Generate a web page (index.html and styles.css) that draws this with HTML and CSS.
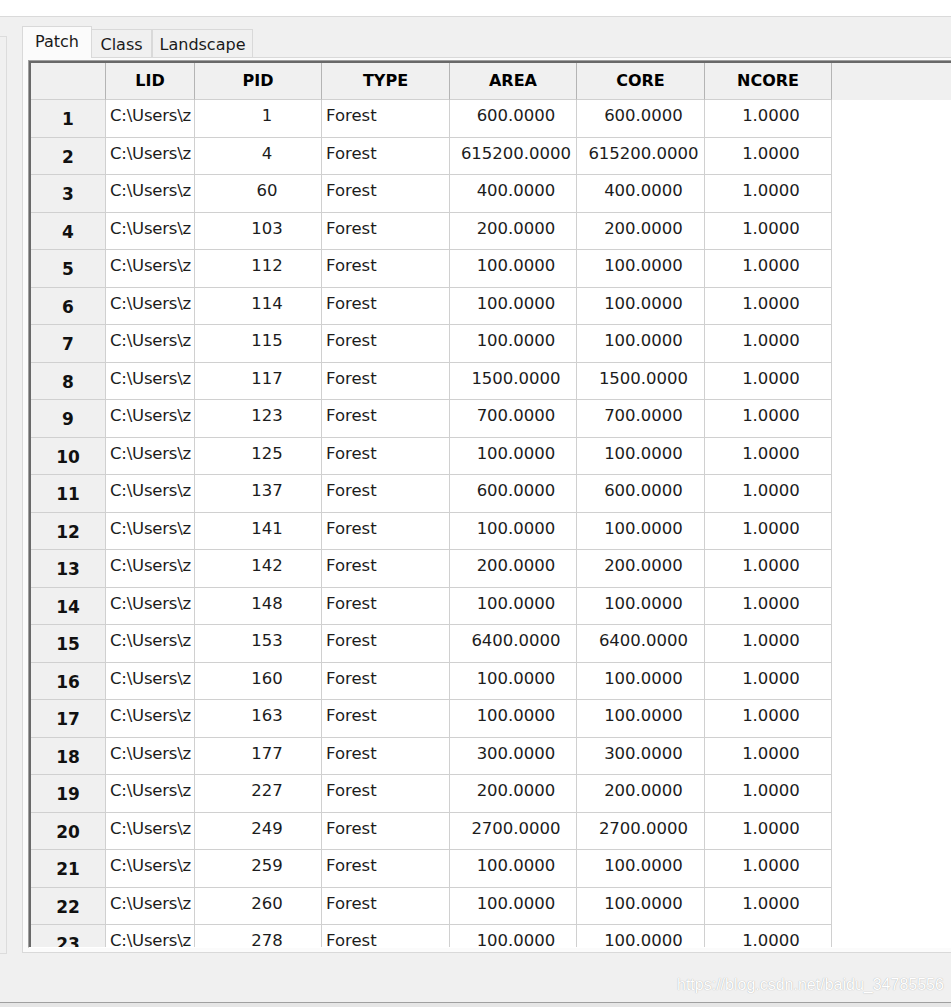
FILE: index.html
```html
<!DOCTYPE html>
<html lang="en">
<head>
    <meta charset="UTF-8">
    <meta name="viewport" content="width=device-width, initial-scale=1.0">
    <title>Patch Metrics</title>
    <link rel="stylesheet" href="styles.css">
</head>
<body>
    <div class="topbar"></div>
    <div class="workspace">
        <div class="side-panel"></div>
        <div class="tabs">
            <div class="tab-bar">
                <div class="tab active">Patch</div>
                <div class="tab tab-class">Class</div>
                <div class="tab tab-landscape">Landscape</div>
            </div>
            <div class="tab-pane">
                <div class="grid-frame">
                    <div class="grid">
                        <div class="row head">
                            <div class="cell corner"></div>
                            <div class="cell">LID</div>
                            <div class="cell">PID</div>
                            <div class="cell">TYPE</div>
                            <div class="cell">AREA</div>
                            <div class="cell">CORE</div>
                            <div class="cell">NCORE</div>
                            <div class="fill"></div>
                        </div>
                        <!-- patch rows -->
                        <div class="row"><div class="cell num">1</div><div class="cell lid">C:\Users\z</div><div class="cell pid">1</div><div class="cell type">Forest</div><div class="cell val">600.0000</div><div class="cell val">600.0000</div><div class="cell val">1.0000</div><div class="fill"></div></div>
                        <div class="row"><div class="cell num">2</div><div class="cell lid">C:\Users\z</div><div class="cell pid">4</div><div class="cell type">Forest</div><div class="cell val">615200.0000</div><div class="cell val">615200.0000</div><div class="cell val">1.0000</div><div class="fill"></div></div>
                        <div class="row"><div class="cell num">3</div><div class="cell lid">C:\Users\z</div><div class="cell pid">60</div><div class="cell type">Forest</div><div class="cell val">400.0000</div><div class="cell val">400.0000</div><div class="cell val">1.0000</div><div class="fill"></div></div>
                        <div class="row"><div class="cell num">4</div><div class="cell lid">C:\Users\z</div><div class="cell pid">103</div><div class="cell type">Forest</div><div class="cell val">200.0000</div><div class="cell val">200.0000</div><div class="cell val">1.0000</div><div class="fill"></div></div>
                        <div class="row"><div class="cell num">5</div><div class="cell lid">C:\Users\z</div><div class="cell pid">112</div><div class="cell type">Forest</div><div class="cell val">100.0000</div><div class="cell val">100.0000</div><div class="cell val">1.0000</div><div class="fill"></div></div>
                        <div class="row"><div class="cell num">6</div><div class="cell lid">C:\Users\z</div><div class="cell pid">114</div><div class="cell type">Forest</div><div class="cell val">100.0000</div><div class="cell val">100.0000</div><div class="cell val">1.0000</div><div class="fill"></div></div>
                        <div class="row"><div class="cell num">7</div><div class="cell lid">C:\Users\z</div><div class="cell pid">115</div><div class="cell type">Forest</div><div class="cell val">100.0000</div><div class="cell val">100.0000</div><div class="cell val">1.0000</div><div class="fill"></div></div>
                        <div class="row"><div class="cell num">8</div><div class="cell lid">C:\Users\z</div><div class="cell pid">117</div><div class="cell type">Forest</div><div class="cell val">1500.0000</div><div class="cell val">1500.0000</div><div class="cell val">1.0000</div><div class="fill"></div></div>
                        <div class="row"><div class="cell num">9</div><div class="cell lid">C:\Users\z</div><div class="cell pid">123</div><div class="cell type">Forest</div><div class="cell val">700.0000</div><div class="cell val">700.0000</div><div class="cell val">1.0000</div><div class="fill"></div></div>
                        <div class="row"><div class="cell num">10</div><div class="cell lid">C:\Users\z</div><div class="cell pid">125</div><div class="cell type">Forest</div><div class="cell val">100.0000</div><div class="cell val">100.0000</div><div class="cell val">1.0000</div><div class="fill"></div></div>
                        <div class="row"><div class="cell num">11</div><div class="cell lid">C:\Users\z</div><div class="cell pid">137</div><div class="cell type">Forest</div><div class="cell val">600.0000</div><div class="cell val">600.0000</div><div class="cell val">1.0000</div><div class="fill"></div></div>
                        <div class="row"><div class="cell num">12</div><div class="cell lid">C:\Users\z</div><div class="cell pid">141</div><div class="cell type">Forest</div><div class="cell val">100.0000</div><div class="cell val">100.0000</div><div class="cell val">1.0000</div><div class="fill"></div></div>
                        <div class="row"><div class="cell num">13</div><div class="cell lid">C:\Users\z</div><div class="cell pid">142</div><div class="cell type">Forest</div><div class="cell val">200.0000</div><div class="cell val">200.0000</div><div class="cell val">1.0000</div><div class="fill"></div></div>
                        <div class="row"><div class="cell num">14</div><div class="cell lid">C:\Users\z</div><div class="cell pid">148</div><div class="cell type">Forest</div><div class="cell val">100.0000</div><div class="cell val">100.0000</div><div class="cell val">1.0000</div><div class="fill"></div></div>
                        <div class="row"><div class="cell num">15</div><div class="cell lid">C:\Users\z</div><div class="cell pid">153</div><div class="cell type">Forest</div><div class="cell val">6400.0000</div><div class="cell val">6400.0000</div><div class="cell val">1.0000</div><div class="fill"></div></div>
                        <div class="row"><div class="cell num">16</div><div class="cell lid">C:\Users\z</div><div class="cell pid">160</div><div class="cell type">Forest</div><div class="cell val">100.0000</div><div class="cell val">100.0000</div><div class="cell val">1.0000</div><div class="fill"></div></div>
                        <div class="row"><div class="cell num">17</div><div class="cell lid">C:\Users\z</div><div class="cell pid">163</div><div class="cell type">Forest</div><div class="cell val">100.0000</div><div class="cell val">100.0000</div><div class="cell val">1.0000</div><div class="fill"></div></div>
                        <div class="row"><div class="cell num">18</div><div class="cell lid">C:\Users\z</div><div class="cell pid">177</div><div class="cell type">Forest</div><div class="cell val">300.0000</div><div class="cell val">300.0000</div><div class="cell val">1.0000</div><div class="fill"></div></div>
                        <div class="row"><div class="cell num">19</div><div class="cell lid">C:\Users\z</div><div class="cell pid">227</div><div class="cell type">Forest</div><div class="cell val">200.0000</div><div class="cell val">200.0000</div><div class="cell val">1.0000</div><div class="fill"></div></div>
                        <div class="row"><div class="cell num">20</div><div class="cell lid">C:\Users\z</div><div class="cell pid">249</div><div class="cell type">Forest</div><div class="cell val">2700.0000</div><div class="cell val">2700.0000</div><div class="cell val">1.0000</div><div class="fill"></div></div>
                        <div class="row"><div class="cell num">21</div><div class="cell lid">C:\Users\z</div><div class="cell pid">259</div><div class="cell type">Forest</div><div class="cell val">100.0000</div><div class="cell val">100.0000</div><div class="cell val">1.0000</div><div class="fill"></div></div>
                        <div class="row"><div class="cell num">22</div><div class="cell lid">C:\Users\z</div><div class="cell pid">260</div><div class="cell type">Forest</div><div class="cell val">100.0000</div><div class="cell val">100.0000</div><div class="cell val">1.0000</div><div class="fill"></div></div>
                        <div class="row"><div class="cell num">23</div><div class="cell lid">C:\Users\z</div><div class="cell pid">278</div><div class="cell type">Forest</div><div class="cell val">100.0000</div><div class="cell val">100.0000</div><div class="cell val">1.0000</div><div class="fill"></div></div>
                    </div>
                </div>
            </div>
        </div>
    </div>
    <div class="statusbar">
        <span class="watermark">https://blog.csdn.net/baidu_34785556</span>
    </div>
</body>
</html>
```

FILE: styles.css
```css
html, body {
    margin: 0;
    height: 100%;
    overflow: hidden;
}
body {
    background-color: #f0f0f0;
    font-family: "DejaVu Sans", Verdana, sans-serif;
    color: #1c1c1c;
    position: relative;
}
.topbar {
    height: 16px;
    background-color: #ffffff;
    border-bottom: 1px solid #dadada;
}
.workspace {
    display: flex;
    height: 985px;
    overflow: hidden;
}
.side-panel {
    width: 6px;
    margin-top: 19px;
    height: 916px;
    border-top: 1px solid #dcdcdc;
    border-right: 1px solid #dcdcdc;
    border-bottom: 1px solid #dcdcdc;
    flex-shrink: 0;
}
.tabs {
    margin-left: 15px;
    margin-top: 9px;
    flex: 1;
    min-width: 0;
    margin-right: -20px;
}
.tab-bar {
    display: flex;
    align-items: flex-end;
    height: 31px;
}
.tab {
    box-sizing: border-box;
    height: 28px;
    padding-top: 5px;
    font-size: 16px;
    color: #1a1a1a;
    background-color: #f0f0f0;
    border: 1px solid #d9d9d9;
    border-bottom: none;
    text-align: center;
}
.tab.active {
    height: 32px;
    width: 70px;
    padding-top: 5px;
    margin-bottom: -1px;
    background-color: #fbfbfb;
    position: relative;
    z-index: 1;
}
.tab-class {
    width: 60px;
    border-left: none;
}
.tab-landscape {
    width: 101px;
    border-left: 1px solid #d9d9d9;
}
.tab-pane {
    box-sizing: border-box;
    height: 896px;
    background-color: #fbfbfb;
    border: 1px solid #d9d9d9;
    padding: 2px 0 4px 5px;
}
.grid-frame {
    box-sizing: border-box;
    height: 888px;
    border-top: 1px solid #a0a0a0;
    border-left: 1px solid #a0a0a0;
    border-bottom: 1px solid #ffffff;
    box-shadow: inset 2px 2px 0 #696969;
    padding: 2px 0 0 2px;
}
.grid {
    height: 884px;
    overflow: hidden;
    background-color: #ffffff;
}
.row {
    display: grid;
    grid-template-columns: 75px 89px 127px 128px 127px 128px 127px 1fr;
    height: 37.5px;
}
.cell {
    box-sizing: border-box;
    border-right: 1px solid #d0d0d0;
    border-bottom: 1px solid #d0d0d0;
    font-size: 16.5px;
    line-height: 20px;
    padding-top: 6px;
    white-space: nowrap;
    overflow: hidden;
}
.head {
    height: 37px;
    background-color: #f0f0f0;
}
.head .cell {
    font-weight: bold;
    font-size: 16px;
    color: #000000;
    text-align: center;
    padding-top: 8px;
    border-right-color: #b4b4b4;
    border-bottom-color: #d0d0d0;
}
.num {
    background-color: #f0f0f0;
    font-weight: bold;
    font-size: 17px;
    color: #111111;
    text-align: center;
    padding-top: 9px;
}
.lid, .type {
    padding-left: 4px;
}
.lid {
    letter-spacing: -0.2px;
}
.pid {
    text-align: center;
    padding-left: 18px;
}
.val {
    text-align: center;
    padding-left: 6px;
}
.statusbar {
    height: 30px;
    border-top: 1px solid #a0a0a0;
    background-color: #e6e6e6;
}
.watermark {
    position: absolute;
    left: 677px;
    top: 976px;
    font-family: "Liberation Sans", Arial, sans-serif;
    font-size: 16px;
    color: #ffffff;
    text-shadow: 0 0 1px rgba(0, 0, 0, 0.35);
}
```
